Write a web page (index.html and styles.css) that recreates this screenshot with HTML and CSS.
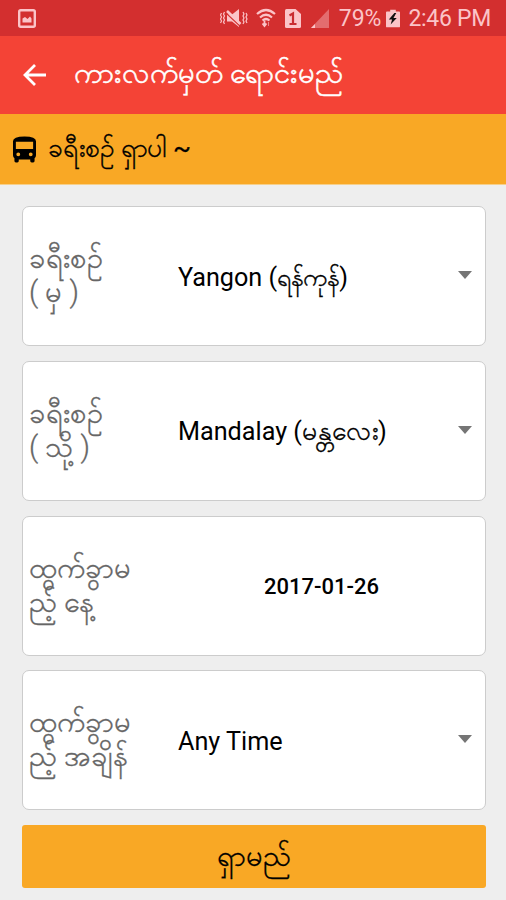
FILE: index.html
```html
<!DOCTYPE html>
<html lang="my">
<head>
    <meta charset="UTF-8">
    <meta name="viewport" content="width=device-width, initial-scale=1.0">
    <title>ကားလက်မှတ် ရောင်းမည်</title>
    <link rel="stylesheet" href="styles.css">
</head>
<body>
    <!-- Status bar -->
    <div class="status-bar">
        <svg class="icon-picture" width="18" height="19" viewBox="0 0 18 19">
            <rect x="1.2" y="1.2" width="15.6" height="16.6" rx="1.5" fill="none" stroke="currentColor" stroke-width="2.4"/>
            <path d="M4.5 13.5V9.5L7 8l2.5 2L12 7.5l1.5 2v4z" fill="currentColor"/>
        </svg>
        <div class="status-icons">
            <svg class="icon-mute" width="28" height="20" viewBox="0 0 28 20">
                <path d="M7 6.5h5L19 1v18l-7-5.500H7z" fill="currentColor"/>
                <path d="M5.5 4.5l15 14" stroke="#d32f2f" stroke-width="1.2"/>
                <path d="M7 3l13.5 13" stroke="currentColor" stroke-width="2.6"/>
                <path d="M4.5 4l-1 2 1 2-1 2 1 2-1 2 1 2M1.5 5l-1 2 1 2-1 2 1 2-1 2M23 4l1 2-1 2 1 2-1 2 1 2-1 2M26 5l1 2-1 2 1 2-1 2 1 2" fill="none" stroke="currentColor" stroke-width="1.2"/>
            </svg>
            <svg class="icon-wifi" width="20" height="20" viewBox="0 0 20 20">
                <path d="M1 6Q10-2 19 6M4 9.5q6-5.500 12 0M6.500 12.500q3.500-3 7 0" fill="none" stroke="currentColor" stroke-width="2.2"/>
                <path d="M8.500 12.500v5M6.500 15.500l2 2.500 2-2.500" fill="none" stroke="currentColor" stroke-width="1.8"/>
                <path d="M12.500 18v-4" fill="none" stroke="currentColor" opacity=".6"/>
            </svg>
            <svg class="icon-sim" width="16" height="19" viewBox="0 0 16 19">
                <path d="M1.5 0h9L16 5v12.5q0 1.5-1.5 1.5h-13Q0 19 0 17.5v-16Q0 0 1.5 0z" fill="currentColor"/>
                <path d="M4.5 6.500L8 4.500V15M4.500 15h7" fill="none" stroke="#c92c31" stroke-width="2.2"/>
            </svg>
            <svg class="icon-signal" width="20" height="19" viewBox="0 0 20 19">
                <path d="M19 0v19H1z" fill="currentColor" opacity=".42"/>
                <path d="M5 15v4H1z" fill="currentColor"/>
            </svg>
            <span class="battery-level">79%</span>
            <svg class="icon-battery" width="14" height="19" viewBox="0 0 15 19">
                <path d="M4.5 0h6v2H14q1 0 1 1v15q0 1-1 1H1q-1 0-1-1V3q0-1 1-1h3.5z" fill="currentColor"/>
                <path d="M9 3.5L3 10.5h3.5L5 16l6.5-7H8l3-5.5z" fill="#111"/>
            </svg>
            <span class="clock">2:46 PM</span>
        </div>
    </div>

    <div class="toolbar">
        <svg class="icon-back" width="24" height="22" viewBox="0 0 24 22">
            <path d="M23 11H2M12 1L2 11l10 10" fill="none" stroke="currentColor" stroke-width="2.8"/>
        </svg>
        <h1>ကားလက်မှတ် ရောင်းမည်</h1>
    </div>

    <div class="section-bar">
        <svg class="icon-bus" width="23" height="27" viewBox="0 0 24 27">
            <path d="M0 5Q0 0 12 0t12 5v14.5q0 2-1.5 3V25.5q0 1.5-1.5 1.5h-1.5q-1.5 0-1.5-1.5V24h-12v1.5Q6 27 4.500 27H3q-1.5 0-1.500-1.500v-3Q0 21.500 0 19.500zM3 5.500v7.500h18V5.500zM5.500 16.500a2 2 0 1 0 0 4 2 2 0 0 0 0-4zm13 0a2 2 0 1 0 0 4 2 2 0 0 0 0-4z" fill="#000" fill-rule="evenodd"/>
        </svg>
        <h2>ခရီးစဥ် ရှာပါ ~</h2>
    </div>

    <!-- Search form -->
    <div class="search-form">
        <div class="field">
            <div class="field-label">ခရီးစဥ်<br>( မှ )</div>
            <div class="field-value">Yangon (<span class="mm mm-small">ရန်ကုန်</span>)</div>
            <div class="arrow"></div>
        </div>
        <div class="field">
            <div class="field-label">ခရီးစဥ်<br>( သို့ )</div>
            <div class="field-value">Mandalay (<span class="mm">မန္တလေး</span>)</div>
            <div class="arrow"></div>
        </div>
        <div class="field">
            <div class="field-label">ထွက်ခွာမ<br>ည့် နေ့</div>
            <div class="field-value field-date">2017-01-26</div>
        </div>
        <div class="field">
            <div class="field-label">ထွက်ခွာမ<br>ည့် အချိန်</div>
            <div class="field-value">Any Time</div>
            <div class="arrow"></div>
        </div>
        <button class="button">ရှာမည်</button>
    </div>
</body>
</html>
```
FILE: styles.css
```css
* { margin: 0; padding: 0; box-sizing: border-box; }
body {
    height: 900px;
    overflow: hidden;
    background-color: #eeeeee;
    font-family: Roboto, "Noto Sans", sans-serif;
    color: #000;
}
svg { display: block; flex: none; }
.status-bar {
    height: 36px;
    padding: 0 15px 0 18px;
    display: flex;
    justify-content: space-between;
    align-items: center;
    background-color: #d32f2f;
    color: #fbc4c8;
}
.status-icons {
    display: flex;
    align-items: center;
    font-size: 23px;
    line-height: 36px;
    white-space: nowrap;
}
.battery-level, .clock { padding-top: 1px; }
.icon-wifi { margin-left: 8px; }
.icon-sim { margin-left: 9px; }
.icon-signal { margin-left: 9px; }
.battery-level { margin-left: 9px; }
.icon-battery { margin-left: 5px; }
.clock {
    margin-left: 8px;
    letter-spacing: -0.3px;
}
.toolbar {
    height: 78px;
    padding-left: 23px;
    display: flex;
    align-items: center;
    background-color: #f44336;
    color: white;
}
.toolbar h1 {
    margin-left: 27px;
    padding-bottom: 4px;
    font-size: 29.2px;
    line-height: 40px;
    font-weight: 500;
    white-space: nowrap;
    -webkit-text-stroke: 0.5px;
}
.section-bar {
    height: 71px;
    padding-left: 13px;
    display: flex;
    align-items: center;
    background-color: #f9a825;
    border-bottom: 1px solid #f6cf8a;
}
.section-bar h2 {
    margin-left: 12px;
    padding-bottom: 2px;
    font-size: 26.4px;
    line-height: 40px;
    font-weight: 400;
    -webkit-text-stroke: 0.3px;
}
.search-form {
    padding: 21px 20px 0 22px;
    display: flex;
    flex-direction: column;
    gap: 14.8px;
}
.field {
    height: 140px;
    padding: 0 13px 0 6px;
    display: flex;
    align-items: center;
    background-color: white;
    border: 1.5px solid #cccccc;
    border-radius: 7px;
}
.field-label {
    width: 149px;
    flex: none;
    padding-bottom: 2px;
    font-size: 29px;
    font-weight: 300;
    line-height: 34px;
    color: #666;
    white-space: nowrap;
    -webkit-text-stroke: 0.3px;
}
.field-value {
    flex: 1;
    padding-top: 3px;
    font-size: 25.2px;
    line-height: 34px;
    white-space: nowrap;
}
.mm {
    font-size: 26.6px;
    line-height: 1;
    -webkit-text-stroke: 0.3px;
}
.mm-small { font-size: 25px; }
.field-date {
    padding-right: 7px;
    font-size: 22px;
    font-weight: 500;
    text-align: center;
}
.arrow {
    margin-bottom: 2px;
    border-left: 7px solid transparent;
    border-right: 7px solid transparent;
    border-top: 8px solid #757575;
}
.button {
    height: 63px;
    padding-top: 3px;
    background-color: #f9a825;
    color: #000;
    font-family: inherit;
    font-size: 29px;
    border: none;
    border-radius: 3px;
    cursor: pointer;
    -webkit-text-stroke: 0.3px;
}
```
